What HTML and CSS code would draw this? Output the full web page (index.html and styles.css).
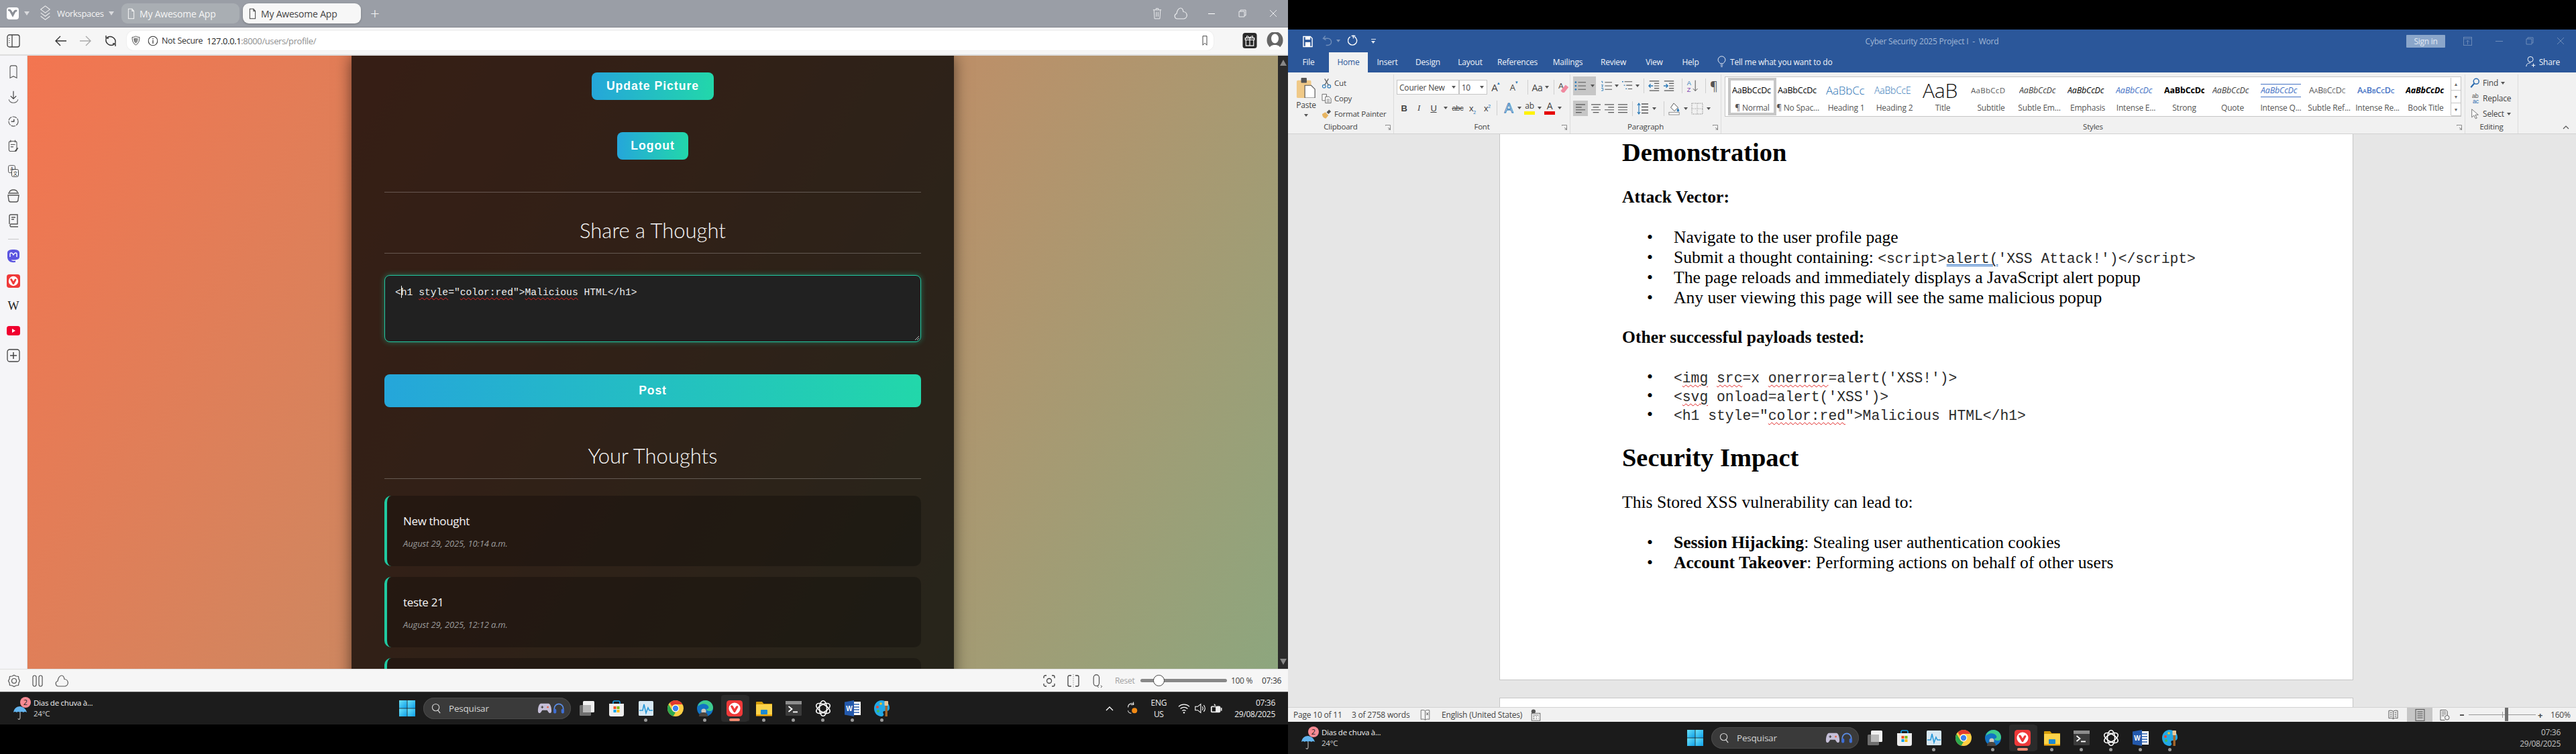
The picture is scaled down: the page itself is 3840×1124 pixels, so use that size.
FILE: index.html
```html
<!DOCTYPE html>
<html lang="en">
<head>
<meta charset="utf-8">
<title>Vivaldi and Word</title>
<link rel="stylesheet" href="styles.css">
</head>
<body>
<svg class="defs" width="0" height="0" aria-hidden="true">
  <defs>
    <linearGradient id="winG" x1="0" y1="0" x2="1" y2="1"><stop offset="0" stop-color="#6ce4fb"/><stop offset="1" stop-color="#0f9fe8"/></linearGradient>
    <symbol id="start" viewBox="0 0 24 24"><rect x="0" y="0" width="11.6" height="11.6" fill="url(#winG)"/><rect x="12.4" y="0" width="11.6" height="11.6" fill="url(#winG)"/><rect x="0" y="12.4" width="11.6" height="11.6" fill="url(#winG)"/><rect x="12.4" y="12.4" width="11.6" height="11.6" fill="url(#winG)"/></symbol>
    <symbol id="taskview" viewBox="0 0 24 24"><rect x="6" y="1" width="17" height="17" rx="1.5" fill="#f2f2f2"/><rect x="1" y="7" width="17" height="16" rx="1.5" fill="#7c7c7c" fill-opacity=".85"/><rect x="6" y="7" width="12" height="11" fill="#b9b9b9"/></symbol>
    <symbol id="store" viewBox="0 0 24 24"><path d="M7 5V2.500A2 2 0 0 1 9 1h6a2 2 0 0 1 2 1.500V5" fill="none" stroke="#14a3ee" stroke-width="1.600"/><path d="M1 5h22v16a3 3 0 0 1-3 3H4a3 3 0 0 1-3-3z" fill="#eee"/><rect x="7.500" y="9" width="4" height="4" fill="#f25022"/><rect x="12.500" y="9" width="4" height="4" fill="#7fba00"/><rect x="7.500" y="14" width="4" height="4" fill="#00a4ef"/><rect x="12.500" y="14" width="4" height="4" fill="#ffb900"/></symbol>
    <symbol id="taskmgr" viewBox="0 0 24 24"><rect x="1" y="1" width="22" height="22" rx="1.500" fill="#d8e8f3"/><path d="M2 15h5l2-9 3 13 3-8 2 4h5" fill="none" stroke="#2a9ad9" stroke-width="1.600"/></symbol>
    <symbol id="chrome" viewBox="0 0 24 24"><circle cx="12" cy="12" r="12" fill="#ffce44"/><path d="M12 0a12 12 0 0 1 10.400 6H12a6 6 0 0 0-5.200 3L3.600 3.900A12 12 0 0 1 12 0z" fill="#e33b2e"/><path d="M1.600 6 7 15a6 6 0 0 0 5 3l-3.300 5.600A12 12 0 0 1 1.600 6z" fill="#2da94f"/><circle cx="12" cy="12" r="5.400" fill="#fff"/><circle cx="12" cy="12" r="4.200" fill="#3b82f1"/></symbol>
    <symbol id="edge" viewBox="0 0 24 24"><circle cx="12" cy="12" r="12" fill="#1273c4"/><path d="M1 9C3 3 8 0 13 0c6 0 11 5 11 11 0 3-2 5-5 5s-5-1-5-3c3 0 4-2 3-4-2-4-9-5-13-2-1 .5-2 1-3 2z" fill="#3ecb8e"/><circle cx="10" cy="16" r="3.600" fill="#cfc7bd"/><path d="M3 24c0-5 3-6 7-6s6 2 6 6z" fill="#4a443f"/></symbol>
    <symbol id="vivaldi" viewBox="0 0 24 24"><rect width="24" height="24" rx="4.500" fill="#ef3939"/><circle cx="12" cy="12" r="8.600" fill="#fff"/><path d="M7.600 7.500c1.400 0 1.900.7 2.500 1.800l1.900 3.400 1.700-3c.5-.9 1.100-1.500 2.400-1.500 1.200 0 1.700 1.300 1 2.400l-3.800 6.700c-.7 1.200-2 1.200-2.700 0L6.500 10c-.7-1.200-.1-2.500 1.100-2.500z" fill="#ef3939"/></symbol>
    <symbol id="explorer" viewBox="0 0 24 24"><path d="M0 3a1 1 0 0 1 1-1h8l2.500 3H24v17a1 1 0 0 1-1 1H1a1 1 0 0 1-1-1z" fill="#d39b0a"/><rect y="6" width="24" height="17" rx="1" fill="#fcd34a"/><rect x="7" y="14" width="10" height="7" rx="1" fill="#1c8ad2"/><rect y="21" width="24" height="2.500" fill="#f1a90e"/></symbol>
    <symbol id="terminal" viewBox="0 0 24 24"><rect y="1" width="24" height="22" rx="1.500" fill="#3b3b3b"/><rect y="1" width="24" height="5" fill="#8d8d8d"/><path d="m4.500 9 5 4-5 4" fill="none" stroke="#fff" stroke-width="1.800"/><rect x="11" y="16.500" width="7" height="1.800" fill="#fff"/></symbol>
    <symbol id="gpt" viewBox="0 0 24 24"><g fill="none" stroke="#fff" stroke-width="1.500"><ellipse cx="12" cy="12" rx="5.500" ry="11.400"/><ellipse cx="12" cy="12" rx="5.500" ry="11.400" transform="rotate(60 12 12)"/><ellipse cx="12" cy="12" rx="5.500" ry="11.400" transform="rotate(120 12 12)"/></g></symbol>
    <symbol id="wordapp" viewBox="0 0 24 24"><rect x="6" y="2" width="18" height="20" fill="#fff"/><path d="M13 6h9M13 10h9M13 14h9M13 18h9" stroke="#2b5fb0" stroke-width="1.600"/><path d="M0 2.500 14 0v24L0 21.500z" fill="#2459ac"/><text x="7" y="16" text-anchor="middle" font-family="Liberation Sans" font-size="10" font-weight="700" fill="#fff">W</text></symbol>
    <symbol id="paint" viewBox="0 0 24 24"><path d="M11 0c7 0 12 5 12 11 0 4-2 5-5 5h-3c-2 0-2 3-1 4 1 2-1 4-3 4C5 24 0 19 0 12 0 5 5 0 11 0z" fill="#22a8e6"/><circle cx="5" cy="10" r="2" fill="#e94b35"/><circle cx="10" cy="5" r="1.800" fill="#f7c325"/><circle cx="6" cy="16" r="2" fill="#3fbb5c"/><rect x="16.500" y="6" width="3.400" height="18" fill="#a5662b"/><rect x="15.500" y="1" width="5.500" height="7" rx="1" fill="#e8c89a"/></symbol>
    <symbol id="umbrella" viewBox="0 0 20 20"><path d="M0 9C1 3 5 0 10 0l1 .2C15 1 19 4 20 9c-2-1.500-4-1.500-5 0-2-1.500-4-1.500-5 0-2-1.500-4-1.500-5 0-2-1.500-3.500-1.500-5 0z" fill="#63b4ee"/><path d="M10 9v8c0 3-3 3-3 1" fill="none" stroke="#bbb" stroke-width="1.100"/></symbol>
    <symbol id="game" viewBox="0 0 24 24"><path d="M6 4h12c3 0 5 6 5 12 0 4-3 5-5 2l-2-3H8l-2 3c-2 3-5 2-5-2C1 10 3 4 6 4z" fill="#c5bfd8"/><circle cx="17" cy="10" r="1.500" fill="#e8664a"/><path d="M6 10h4M8 8v4" stroke="#444" stroke-width="1.400"/></symbol>
    <symbol id="headset" viewBox="0 0 24 24"><path d="M4 15v-3a8 8 0 0 1 16 0v3" fill="none" stroke="#5c8ee6" stroke-width="2"/><rect x="2.500" y="13" width="5" height="8" rx="2" fill="#3f6fd6"/><rect x="16.500" y="13" width="5" height="8" rx="2" fill="#3f6fd6"/></symbol>
    <symbol id="lens" viewBox="0 0 16 16"><circle cx="7" cy="6.500" r="5.500" fill="none" stroke="currentColor" stroke-width="1.200"/><path d="m10.500 11 3.500 4.500" stroke="currentColor" stroke-width="1.400"/></symbol>
    <symbol id="trash" viewBox="0 0 16 20"><path d="M1 4h14M6 4V1.500h4V4M2.500 4l1 15h9l1-15M6.500 7.500v8M9.500 7.500v8" fill="none" stroke="currentColor" stroke-width="1.100"/></symbol>
    <symbol id="cloud" viewBox="0 0 20 20"><path d="M5 18a4 4 0 0 1-1-7.800C4.500 6 7 2 10 2c2 0 3.500 2.500 4 5.500A5.300 5.300 0 0 1 15 18z" fill="none" stroke="currentColor" stroke-width="1.200"/></symbol>
    <symbol id="doc" viewBox="0 0 12 18"><path d="M1.500 1h6l3 3.500V17h-9z M7.500 1v3.500h3" fill="none" stroke="currentColor" stroke-width="1.100"/></symbol>
    <symbol id="stack" viewBox="0 0 20 28"><path d="m10 1 8 6-8 6-8-6zM2 13l8 6 8-6M2 19l8 6 8-6" fill="none" stroke="currentColor" stroke-width="1.200"/></symbol>
    <symbol id="panel" viewBox="0 0 20 20"><rect x="1" y="1" width="18" height="18" rx="3" fill="none" stroke="#444" stroke-width="1.300"/><path d="M8 1v18" stroke="#444" stroke-width="1.300"/><path d="M4 6v1M4 9v1M4 12v1" stroke="#777" stroke-width="1.500"/></symbol>
    <symbol id="back" viewBox="0 0 20 20"><path d="M18 10H2m7-7-7 7 7 7" fill="none" stroke="currentColor" stroke-width="1.400"/></symbol>
    <symbol id="fwd" viewBox="0 0 20 20"><path d="M2 10h16m-7-7 7 7-7 7" fill="none" stroke="currentColor" stroke-width="1.400"/></symbol>
    <symbol id="reload" viewBox="0 0 20 20"><path d="M4 5.500A8 8 0 0 1 17 13M16 14.500A8 8 0 0 1 3 7" fill="none" stroke="#333" stroke-width="1.400"/><path d="M3 2v4h4M17 18v-4h-4" fill="none" stroke="#333" stroke-width="1.400"/></symbol>
    <symbol id="shield" viewBox="0 0 18 20"><path d="M9 1c2 1.500 4.500 2 7.500 2 0 8-2 13-7.500 16C3.500 16 1.500 11 1.500 3 4.500 3 7 2.500 9 1z" fill="none" stroke="#444" stroke-width="1.300"/><path d="M9 4v12c-3-2-4-5-4.500-10.500C6.500 5.500 8 5 9 4z" fill="#777"/><path d="M9 4v12c3-2 4-5 4.500-10.500C11.500 5.500 10 5 9 4z" fill="#888"/></symbol>
    <symbol id="info" viewBox="0 0 20 20"><circle cx="10" cy="10" r="8.500" fill="none" stroke="#333" stroke-width="1.300"/><path d="M10 8.500V15M10 5v1.800" stroke="#333" stroke-width="1.500"/></symbol>
    <symbol id="bm" viewBox="0 0 10 20"><path d="M1 1h8v18l-4-4-4 4z" fill="none" stroke="#333" stroke-width="1.200"/></symbol>
    <symbol id="gift" viewBox="0 0 22 24"><rect width="22" height="24" rx="4" fill="#2b2b2b"/><path d="M4 8h14v3H4zM5 11v9h12v-9M11 8v12M7 8c-2-3 0-5 4 0 4-5 6-3 4 0" fill="none" stroke="#fff" stroke-width="1.200"/></symbol>
    <symbol id="avatar" viewBox="0 0 24 26"><ellipse cx="12" cy="12" rx="12" ry="13" fill="#666"/><ellipse cx="12" cy="9.500" rx="5.500" ry="7" fill="#fff"/><path d="M3 26c1-6 5-7 9-7s8 1 9 7z" fill="#fff"/></symbol>
    <symbol id="bookmark" viewBox="0 0 16 24"><path d="M2 4a3 3 0 0 1 3-3h6a3 3 0 0 1 3 3v19l-6-3-6 3z" fill="none" stroke="#555" stroke-width="1.300"/></symbol>
    <symbol id="download" viewBox="0 0 20 24"><path d="M10 2v13m-5-4 5 5 5-5" fill="none" stroke="#333" stroke-width="1.300"/><path d="M2 17a8 6 0 0 0 16 0" fill="none" stroke="#666" stroke-width="1.300"/></symbol>
    <symbol id="history" viewBox="0 0 20 24"><circle cx="10" cy="12" r="8.500" fill="none" stroke="#555" stroke-width="1.300" stroke-dasharray="8 1.500"/><path d="M6 12h5V8" fill="none" stroke="#333" stroke-width="1.500"/></symbol>
    <symbol id="notes" viewBox="0 0 20 24"><rect x="2" y="3" width="14" height="18" rx="3" fill="none" stroke="#555" stroke-width="1.300"/><path d="M5 1v4M13 1v4M5 9h8M5 13h5" stroke="#555" stroke-width="1.300"/><path d="m13 21 5-6" stroke="#444" stroke-width="2"/></symbol>
    <symbol id="translate" viewBox="0 0 20 24"><rect x="1" y="2" width="12" height="13" rx="2.500" fill="none" stroke="#555" stroke-width="1.200"/><rect x="7" y="9" width="12" height="13" rx="2.500" fill="#fff" stroke="#444" stroke-width="1.200"/><text x="4.500" y="11" font-family="Liberation Sans" font-size="8" fill="#333">A</text><text x="9.500" y="19" font-family="Noto Sans CJK SC" font-size="8" fill="#333">文</text></symbol>
    <symbol id="bowl" viewBox="0 0 20 20"><path d="M4 5a6 4 0 0 1 12 0M2 6h16M2 9h16l-1 7a3 3 0 0 1-3 3H6a3 3 0 0 1-3-3z" fill="none" stroke="#555" stroke-width="1.400"/></symbol>
    <symbol id="book" viewBox="0 0 20 20"><path d="M4 15V3a2 2 0 0 1 2-2h10v14H6a2.500 2.500 0 0 0 0 4h11" fill="none" stroke="#555" stroke-width="1.400"/><path d="M7 5h6M7 8h4" stroke="#555" stroke-width="1.400"/></symbol>
    <symbol id="mastodon" viewBox="0 0 20 20"><path d="M10 0c5 0 9 1 9 5v6c0 3-3 4.500-9 4.500-1 0-2 0-3-.2.300 1.500 2 2 6 1.500v2c-2 .7-11 1.500-12-7V5c0-4 4-5 9-5z" fill="#5b54e0"/><path d="M5 11V6.500c0-2 3-2 4 0l1 1.500 1-1.500c1-2 4-2 4 0V11" fill="none" stroke="#fff" stroke-width="1.400"/></symbol>
    <symbol id="yt" viewBox="0 0 20 14"><rect width="20" height="14" rx="3.500" fill="#f0002f"/><path d="m8 4 5 3-5 3z" fill="#fff"/></symbol>
    <symbol id="plusbox" viewBox="0 0 20 20"><rect x="1" y="1" width="18" height="18" rx="3.500" fill="none" stroke="#444" stroke-width="1.300"/><path d="M10 5v10M5 10h10" stroke="#444" stroke-width="1.500"/></symbol>
    <symbol id="gear" viewBox="0 0 20 20"><circle cx="10" cy="10" r="3.500" fill="none" stroke="#555" stroke-width="1.200"/><path d="M10 1.500 13 3l3.500.5.500 3.500 1.500 3-1.500 3-.5 3.500L13 17l-3 1.500L7 17l-3.500-.5L3 13l-1.500-3L3 7l.5-3.500L7 3z" fill="none" stroke="#555" stroke-width="1.200"/></symbol>
    <symbol id="tiles" viewBox="0 0 20 20"><rect x="3" y="2" width="5" height="16" rx="2.500" fill="none" stroke="#555" stroke-width="1.200"/><rect x="12" y="2" width="5" height="16" rx="2.500" fill="none" stroke="#555" stroke-width="1.200"/></symbol>
    <symbol id="capture" viewBox="0 0 20 20"><path d="M2 6V4a2 2 0 0 1 2-2h2M14 2h2a2 2 0 0 1 2 2v2M18 14v2a2 2 0 0 1-2 2h-2M6 18H4a2 2 0 0 1-2-2v-2" fill="none" stroke="#444" stroke-width="1.300"/><circle cx="10" cy="10" r="3.500" fill="none" stroke="#444" stroke-width="1.300"/></symbol>
    <symbol id="tile2" viewBox="0 0 20 20"><path d="M10 0v20" stroke="#999" stroke-dasharray="1.500 1.500"/><path d="M7 2H4a2 2 0 0 0-2 2v12a2 2 0 0 0 2 2h3M13 2h3a2 2 0 0 1 2 2v12a2 2 0 0 1-2 2h-3" fill="none" stroke="#444" stroke-width="1.300"/></symbol>
    <symbol id="mouse" viewBox="0 0 20 24"><rect x="3" y="1" width="10" height="20" rx="5" fill="none" stroke="#444" stroke-width="1.300"/><path d="m12 20-2 2 2 2M16 20l2 2-2 2" fill="none" stroke="#444" stroke-width="1.200"/></symbol>
    <symbol id="sync" viewBox="0 0 20 24"><path d="M2 10a7 7 0 0 1 11-6M2 16c0 3 3 5 6 5" fill="none" stroke="#eee" stroke-width="1.300"/><path d="M12 0v5H7" fill="none" stroke="#eee" stroke-width="1.300"/><circle cx="14" cy="16" r="5" fill="#f28a14"/></symbol>
    <symbol id="wifi" viewBox="0 0 20 20"><path d="M1 7a13 13 0 0 1 18 0M4 10.500a9 9 0 0 1 12 0M7 14a5 5 0 0 1 6 0" fill="none" stroke="#fff" stroke-width="1.300"/><circle cx="10" cy="17" r="1.300" fill="#fff"/></symbol>
    <symbol id="vol" viewBox="0 0 20 20"><path d="M2 7h4l5-4v14l-5-4H2z" fill="none" stroke="#fff" stroke-width="1.200"/><path d="M13.500 7c1.500 2 1.500 4 0 6M16 4.500c2.700 3.500 2.700 7.500 0 11" fill="none" stroke="#fff" stroke-width="1.200"/></symbol>
    <symbol id="batt" viewBox="0 0 20 20"><rect x="1" y="6" width="16" height="11" rx="2" fill="#eee"/><rect x="17.500" y="9" width="2" height="5" fill="#eee"/><path d="m6 1 5 5H6z" fill="#eee" stroke="#1c1c1c"/><rect x="3" y="8" width="6" height="7" fill="#1c1c1c"/></symbol>
    <symbol id="save" viewBox="0 0 16 20"><path d="M1 3h11l3 3v13H1z" fill="none" stroke="#fff" stroke-width="1.500"/><rect x="4" y="3" width="8" height="5" fill="#fff"/><rect x="4" y="12" width="8" height="7" fill="#fff"/></symbol>
    <symbol id="undo" viewBox="0 0 16 20"><path d="M5 2 1.500 6 6 8.500M2 6h7a5 5 0 0 1 0 11H6" fill="none" stroke="currentColor" stroke-width="1.500"/></symbol>
    <symbol id="redo" viewBox="0 0 16 20"><path d="M4 3.500a7 7 0 1 0 7 0M6 2h6M9 1v5" fill="none" stroke="currentColor" stroke-width="1.500"/></symbol>
    <symbol id="bulb" viewBox="0 0 14 20"><path d="M4.500 13C3 11 1 9.500 1 7a6 6 0 0 1 12 0c0 2.500-2 4-3.500 6zM5 15.500h4M5.500 18h3" fill="none" stroke="#fff" stroke-width="1"/></symbol>
    <symbol id="share" viewBox="0 0 18 20"><circle cx="8" cy="6" r="4.500" fill="none" stroke="#fff" stroke-width="1.100"/><path d="M1 18c0-4 3-6 7-6M13 13v6M10 16h6" fill="none" stroke="#fff" stroke-width="1.100"/></symbol>
    <symbol id="paste" viewBox="0 0 30 32"><rect x="0" y="4" width="23" height="28" rx="2" fill="#f0c987"/><rect x="7" y="0" width="9" height="8" rx="1" fill="#555"/><path d="M13 12h10l6 6v14H13z" fill="#fff" stroke="#555" stroke-width="1.200"/></symbol>
    <symbol id="cut" viewBox="0 0 16 16"><circle cx="4" cy="13" r="2.500" fill="none" stroke="#2b7ab8" stroke-width="1.200"/><circle cx="12" cy="13" r="2.500" fill="none" stroke="#2b7ab8" stroke-width="1.200"/><path d="M5 11 11 1M11 11 5 1" stroke="#666" stroke-width="1.400"/></symbol>
    <symbol id="copy" viewBox="0 0 16 16"><path d="M1 1h7v10H1z" fill="#fff" stroke="#666"/><path d="M6 5h6l3 3v7H6z" fill="#fff" stroke="#666"/><path d="M8 9h5M8 11h5M8 13h5" stroke="#888"/></symbol>
    <symbol id="painter" viewBox="0 0 16 16"><path d="m1 8 5-3 5 5-4 5C4 15 1 12 1 8z" fill="#e8b561"/><path d="m8 5 4-4 3 3-4 4z" fill="#555"/></symbol>
    <symbol id="launcher" viewBox="0 0 8 8"><path d="M0 .500h7.500V8M0 .500V2M4 4l3 3M4.500 7H7V4.500" fill="none" stroke="#777" stroke-width=".8"/></symbol>
    <symbol id="bullets" viewBox="0 0 20 18"><g fill="#2b7ab8"><circle cx="2" cy="3" r="1.500"/><circle cx="2" cy="9" r="1.500"/><circle cx="2" cy="15" r="1.500"/></g><path d="M6 3h13M6 9h13M6 15h13" stroke="#555" stroke-width="1.200"/></symbol>
    <symbol id="numbers" viewBox="0 0 20 18"><path d="M1 1.500h2v3M1 7.500h3l-2 3h2M1 13h3v4H1" fill="none" stroke="#2b7ab8"/><path d="M7 3h12M7 9h12M7 15h12" stroke="#555" stroke-width="1.200"/></symbol>
    <symbol id="multi" viewBox="0 0 20 18"><path d="M1 2h2M4 8h2M7 14h2" stroke="#2b7ab8" stroke-width="1.500"/><path d="M5 2h13M8 8h10M11 14h7" stroke="#555" stroke-width="1.200"/></symbol>
    <symbol id="outdent" viewBox="0 0 20 18"><path d="M2 1h16M10 5h8M10 9h8M10 13h8M2 17h16" stroke="#555" stroke-width="1.300"/><path d="M8 9H1m3-3L1 9l3 3" fill="none" stroke="#2b7ab8" stroke-width="1.500"/></symbol>
    <symbol id="indent" viewBox="0 0 20 18"><path d="M2 1h16M10 5h8M10 9h8M10 13h8M2 17h16" stroke="#555" stroke-width="1.300"/><path d="M1 9h7M5 6l3 3-3 3" fill="none" stroke="#2b7ab8" stroke-width="1.500"/></symbol>
    <symbol id="sort" viewBox="0 0 20 24"><text x="0" y="11" font-family="Liberation Sans" font-size="11" fill="#2b7ab8">A</text><text x="0" y="23" font-family="Liberation Sans" font-size="11" fill="#8246b0">Z</text><path d="M15 2v19m-4-4 4 4 4-4" fill="none" stroke="#555" stroke-width="1.200"/></symbol>
    <symbol id="al" viewBox="0 0 18 16"><path d="M1 1h16M1 5.500h10M1 10h16M1 14.500h10" stroke="#555" stroke-width="1.400"/></symbol>
    <symbol id="ac" viewBox="0 0 18 16"><path d="M1 1h16M4 5.500h10M1 10h16M4 14.500h10" stroke="#555" stroke-width="1.400"/></symbol>
    <symbol id="ar" viewBox="0 0 18 16"><path d="M1 1h16M7 5.500h10M1 10h16M7 14.500h10" stroke="#555" stroke-width="1.400"/></symbol>
    <symbol id="aj" viewBox="0 0 18 16"><path d="M1 1h16M1 5.500h16M1 10h16M1 14.500h16" stroke="#555" stroke-width="1.400"/></symbol>
    <symbol id="lsp" viewBox="0 0 18 18"><path d="M7 2h10M7 6.500h10M7 11h10M7 15.500h10" stroke="#555" stroke-width="1.300"/><path d="M3 1v16M1 4l2-3 2 3M1 14l2 3 2-3" fill="none" stroke="#2b7ab8" stroke-width="1.200"/></symbol>
    <symbol id="shade" viewBox="0 0 20 22"><path d="m9 2 7 7-6 6-6-6z" fill="#fff" stroke="#555" stroke-width="1.100"/><path d="M16 10c1 2 2 3 2 4a2 2 0 0 1-4 0c0-1 1-2 2-4z" fill="#2b7ab8"/><rect x="1" y="17" width="17" height="4" fill="#fff" stroke="#888"/></symbol>
    <symbol id="border" viewBox="0 0 18 18"><rect x="1" y="1" width="16" height="16" fill="none" stroke="#666" stroke-dasharray="1 1.500"/><path d="M1 9h16M9 1v16" stroke="#888" stroke-dasharray="1 1.500"/></symbol>
    <symbol id="effect" viewBox="0 0 20 22"><text x="10" y="19" text-anchor="middle" font-family="Liberation Sans" font-size="22" fill="#dbe7f5" stroke="#2b7ab8" stroke-width=".9">A</text></symbol>
    <symbol id="eraser" viewBox="0 0 20 22"><text x="1" y="13" font-family="Liberation Sans" font-size="13" fill="#555">A</text><path d="m5 17 8-10 5 4-7 9H8z" fill="#f08aa0"/></symbol>
    <symbol id="find" viewBox="0 0 16 18"><circle cx="10" cy="6" r="4.500" fill="none" stroke="#2b6cb0" stroke-width="1.700"/><path d="M6.500 9.500 1 16" stroke="#2b6cb0" stroke-width="2.400"/></symbol>
    <symbol id="replace" viewBox="0 0 16 18"><text x="3" y="8" font-family="Liberation Sans" font-size="10" fill="#555">ab</text><text x="4" y="17" font-family="Liberation Sans" font-size="10" fill="#2b6cb0">ac</text></symbol>
    <symbol id="cursor" viewBox="0 0 16 20"><path d="M2 1v15l4-3.500 3 6 2.500-1-3-6H14z" fill="#fff" stroke="#555"/></symbol>
    <symbol id="winup" viewBox="0 0 14 14"><rect x=".5" y=".5" width="13" height="13" fill="none" stroke="currentColor"/><path d="M1 3h12M7 12V5.500M4.500 8 7 5.500 9.500 8" fill="none" stroke="currentColor"/></symbol>
    <symbol id="restore" viewBox="0 0 12 12"><path d="M3 3V1h8v8H9M1 3h8v8H1z" fill="none" stroke="currentColor"/></symbol>
    <symbol id="close" viewBox="0 0 12 12"><path d="m1 1 10 10M11 1 1 11" stroke="currentColor"/></symbol>
    <symbol id="readv" viewBox="0 0 16 18"><path d="M8 3C6 1.500 4 1.500 1 2v12c3-.5 5-.5 7 1 2-1.500 4-1.500 7-1V2c-3-.5-5-.5-7 1zM8 3v12M3 5h3M3 8h3M10 5h3M10 8h3M3 11h3M10 11h3" fill="none" stroke="#555"/></symbol>
    <symbol id="printv" viewBox="0 0 14 18"><rect x=".5" y=".5" width="13" height="17" fill="none" stroke="#555"/><path d="M3 4h8M3 7h8M3 10h8M3 13h8" stroke="#555"/></symbol>
    <symbol id="webv" viewBox="0 0 16 18"><path d="M1 1h9l2 2v6M1 1v16h7M3 4h7M3 7h7M3 10h4" fill="none" stroke="#555"/><circle cx="11.500" cy="13" r="3.500" fill="none" stroke="#555"/></symbol>
    <symbol id="spellbk" viewBox="0 0 16 20"><path d="M8 3C6 1.500 4 1.500 1 2v15c3-.5 5-.5 7 1 2-1.500 4-1.500 7-1V2c-3-.5-5-.5-7 1zM8 3v15" fill="none" stroke="#666"/><path d="m10 6 3 4M13 6l-3 4" stroke="#444"/></symbol>
    <symbol id="macro" viewBox="0 0 16 20"><circle cx="4" cy="4" r="3.500" fill="#555"/><rect x="1" y="7" width="14" height="12" fill="#fff" stroke="#555"/><path d="M3 10h10M3 13h3M8 13h2M12 13h1M3 16h3M8 16h2M12 16h1" stroke="#555"/></symbol>
  </defs>
</svg>

<div class="screen">
  <section class="browser">
    <header class="tabbar">
      <span class="vlogo"><svg class="i18" viewBox="0 0 18 18"><path d="M3.500 4c1.400 0 2 .8 2.600 2l2.900 5.300 2.300-4.300c.6-1.200 1.200-2 2.700-2" fill="none" stroke="#8b8f96" stroke-width="3.200" stroke-linecap="round"/></svg></span>
      <span class="caret caret-light c1"></span>
      <svg class="ws-icon"><use href="#stack"/></svg>
      <span class="ws-label">Workspaces</span>
      <span class="caret caret-light"></span>
      <div class="tab tab-bg"><svg class="tab-doc"><use href="#doc"/></svg><span>My Awesome App</span></div>
      <div class="tab tab-on"><svg class="tab-doc"><use href="#doc"/></svg><span>My Awesome App</span></div>
      <span class="newtab">+</span>
      <div class="win-btns">
        <svg class="wb-trash"><use href="#trash"/></svg>
        <svg class="wb-cloud"><use href="#cloud"/></svg>
        <span class="wb-min"></span>
        <svg class="wb-box"><use href="#restore"/></svg>
        <svg class="wb-box wb-close"><use href="#close"/></svg>
      </div>
    </header>
    <div class="addrbar">
      <svg class="i20 panel-btn"><use href="#panel"/></svg>
      <svg class="i20 nav nav-back"><use href="#back"/></svg>
      <svg class="i20 nav nav-fwd"><use href="#fwd"/></svg>
      <svg class="i20 nav nav-rel"><use href="#reload"/></svg>
      <div class="urlfield">
        <svg class="shield"><use href="#shield"/></svg>
        <svg class="info"><use href="#info"/></svg>
        <span class="notsec">Not Secure</span>
        <span class="url"><b>127.0.0.1</b>:8000/users/profile/</span>
        <svg class="bm"><use href="#bm"/></svg>
      </div>
      <svg class="gift"><use href="#gift"/></svg>
      <svg class="avatar"><use href="#avatar"/></svg>
    </div>
    <div class="viewport">
      <nav class="sidebar">
        <svg class="side-i"><use href="#bookmark"/></svg>
        <svg class="side-i"><use href="#download"/></svg>
        <svg class="side-i"><use href="#history"/></svg>
        <svg class="side-i"><use href="#notes"/></svg>
        <svg class="side-i"><use href="#translate"/></svg>
        <svg class="side-i"><use href="#bowl"/></svg>
        <svg class="side-i"><use href="#book"/></svg>
        <hr class="side-sep">
        <svg class="side-i"><use href="#mastodon"/></svg>
        <svg class="side-i"><use href="#vivaldi"/></svg>
        <span class="side-w">W</span>
        <svg class="side-i"><use href="#yt"/></svg>
        <svg class="side-i"><use href="#plusbox"/></svg>
      </nav>
      <main class="page">
        <div class="panel">
          <div class="btn-row btn-row-1"><button class="btn btn-update">Update Picture</button></div>
          <div class="btn-row btn-row-2"><button class="btn btn-logout">Logout</button></div>
          <hr class="rule rule-1">
          <h2 class="sec sec-share">Share a Thought</h2>
          <hr class="rule rule-2">
          <div class="textarea"><span class="cursor-wrap">&lt;<i class="text-caret"></i>h1</span> <span class="sq">style</span>="<span class="sq">color:red</span>"&gt;<span class="sq">Malicious</span> HTML&lt;/h1&gt;<svg class="grip" viewBox="0 0 8 8"><path d="M7 1 1 7M7 4 4 7" stroke="#bbb"/></svg></div>
          <button class="btn btn-post">Post</button>
          <h2 class="sec sec-your">Your Thoughts</h2>
          <hr class="rule rule-3">
          <article class="card"><p class="card-t">New thought</p><p class="card-d">August 29, 2025, 10:14 a.m.</p></article>
          <article class="card"><p class="card-t">teste 21</p><p class="card-d">August 29, 2025, 12:12 a.m.</p></article>
          <article class="card"></article>
        </div>
      </main>
      <aside class="scrollbar"><span class="sb-up"></span><span class="sb-down"></span></aside>
    </div>
    <footer class="statusbar">
      <svg class="st-i st-gear"><use href="#gear"/></svg>
      <svg class="st-i"><use href="#tiles"/></svg>
      <svg class="st-i st-cloud"><use href="#cloud"/></svg>
      <svg class="st-i st-right"><use href="#capture"/></svg>
      <svg class="st-i"><use href="#tile2"/></svg>
      <svg class="st-i"><use href="#mouse"/></svg>
      <span class="reset">Reset</span>
      <span class="zoomtrack"><span class="zoomthumb"></span></span>
      <span class="zoomval">100 %</span>
      <span class="stclock">07:36</span>
    </footer>
    <div class="taskbar">
      <div class="weather">
        <svg class="umbrella"><use href="#umbrella"/></svg>
        <span class="badge">2</span>
        <div class="w-text"><span>Dias de chuva à...</span><span class="w-temp">24°C</span></div>
      </div>
      <svg class="tb-i"><use href="#start"/></svg>
      <div class="search"><svg class="lens"><use href="#lens"/></svg><span class="s-label">Pesquisar</span><svg class="s-game"><use href="#game"/></svg><svg class="s-head"><use href="#headset"/></svg></div>
      <div class="apps">
        <span class="app"><svg class="tb-i"><use href="#taskview"/></svg></span>
        <span class="app"><svg class="tb-i"><use href="#store"/></svg></span>
        <span class="app run"><svg class="tb-i"><use href="#taskmgr"/></svg></span>
        <span class="app"><svg class="tb-i"><use href="#chrome"/></svg></span>
        <span class="app run"><svg class="tb-i"><use href="#edge"/></svg></span>
        <span class="app active"><svg class="tb-i"><use href="#vivaldi"/></svg></span>
        <span class="app run"><svg class="tb-i"><use href="#explorer"/></svg></span>
        <span class="app run"><svg class="tb-i"><use href="#terminal"/></svg></span>
        <span class="app run"><svg class="tb-i"><use href="#gpt"/></svg></span>
        <span class="app run"><svg class="tb-i"><use href="#wordapp"/></svg></span>
        <span class="app run"><svg class="tb-i"><use href="#paint"/></svg></span>
      </div>
      <div class="tray">
        <svg class="tray-chev" viewBox="0 0 12 8"><path d="m1 7 5-5 5 5" fill="none" stroke="#fff" stroke-width="1.300"/></svg>
        <svg class="tray-sync"><use href="#sync"/></svg>
        <div class="tray-lang"><span>ENG</span><span>US</span></div>
        <svg class="tray-i"><use href="#wifi"/></svg>
        <svg class="tray-i"><use href="#vol"/></svg>
        <svg class="tray-i"><use href="#batt"/></svg>
        <div class="clock"><span>07:36</span><span>29/08/2025</span></div>
      </div>
    </div>
  </section>

  <section class="word">
    <div class="blackbar"></div>
    <div class="titlebar">
      <svg class="qat qat-save"><use href="#save"/></svg>
      <svg class="qat qat-undo"><use href="#undo"/></svg>
      <span class="caret caret-dim"></span>
      <svg class="qat qat-redo"><use href="#redo"/></svg>
      <span class="qat-more"></span>
      <span class="doc-title">Cyber Security 2025 Project I  -  Word</span>
      <span class="signin">Sign in</span>
      <svg class="wctl wctl-1"><use href="#winup"/></svg>
      <span class="wctl-min"></span>
      <svg class="wctl"><use href="#restore"/></svg>
      <svg class="wctl"><use href="#close"/></svg>
    </div>
    <div class="rtabs">
      <span>File</span><span class="rt-on">Home</span><span>Insert</span><span>Design</span><span>Layout</span><span>References</span><span>Mailings</span><span>Review</span><span>View</span><span>Help</span>
      <span class="tellme"><svg class="bulb"><use href="#bulb"/></svg>Tell me what you want to do</span>
      <span class="shr"><svg class="shr-i"><use href="#share"/></svg>Share</span>
    </div>
    <div class="ribbon">
      <div class="grp g-clip">
        <div class="g-body clip-body">
          <div class="pastebtn"><svg class="paste-i"><use href="#paste"/></svg><span>Paste</span><span class="caret caret-dark"></span></div>
          <div class="clip-list">
            <span><svg class="c-i"><use href="#cut"/></svg>Cut</span>
            <span><svg class="c-i"><use href="#copy"/></svg>Copy</span>
            <span><svg class="c-i"><use href="#painter"/></svg>Format Painter</span>
          </div>
        </div>
        <div class="g-name">Clipboard<svg class="launch"><use href="#launcher"/></svg></div>
      </div>
      <div class="grp g-font">
        <div class="g-body">
          <div class="row f-row1">
            <span class="fbox fbox-name">Courier New<i class="caret caret-dark"></i></span>
            <span class="fbox fbox-size">10<i class="caret caret-dark"></i></span>
            <span class="big-a">A<sup>▴</sup></span>
            <span class="big-a small-a">A<sup>▾</sup></span>
            <span class="tsep"></span>
            <span class="aa">Aa<i class="caret caret-dark"></i></span>
            <span class="tsep"></span>
            <svg class="t18"><use href="#eraser"/></svg>
          </div>
          <div class="row f-row2">
            <b class="ft ft-b">B</b><i class="ft ft-i">I</i><u class="ft ft-u">U</u><i class="caret caret-dark cu"></i>
            <s class="ft ft-s">abc</s><span class="ft ft-x">x<sub>2</sub></span><span class="ft ft-x">x<sup>2</sup></span>
            <span class="tsep tsep-2"></span>
            <svg class="t18"><use href="#effect"/></svg><i class="caret caret-dark"></i>
            <span class="hl hl-y">ab</span><i class="caret caret-dark"></i>
            <span class="hl hl-r">A</span><i class="caret caret-dark"></i>
          </div>
        </div>
        <div class="g-name">Font<svg class="launch"><use href="#launcher"/></svg></div>
      </div>
      <div class="grp g-para">
        <div class="g-body">
          <div class="row p-row1">
            <span class="ptile"><svg class="t16"><use href="#bullets"/></svg><i class="caret caret-dark"></i></span>
            <svg class="t16 p-num"><use href="#numbers"/></svg><i class="caret caret-dark"></i>
            <svg class="t16 p-mul"><use href="#multi"/></svg><i class="caret caret-dark"></i>
            <span class="tsep"></span>
            <svg class="t18w"><use href="#outdent"/></svg>
            <svg class="t18w"><use href="#indent"/></svg>
            <span class="tsep"></span>
            <svg class="t18w"><use href="#sort"/></svg>
            <span class="tsep"></span>
            <span class="pil">¶</span>
          </div>
          <div class="row p-row2">
            <span class="ptile ptile-a"><svg class="al-i"><use href="#al"/></svg></span>
            <svg class="al-i"><use href="#ac"/></svg>
            <svg class="al-i"><use href="#ar"/></svg>
            <svg class="al-i"><use href="#aj"/></svg>
            <span class="tsep"></span>
            <svg class="t18w"><use href="#lsp"/></svg><i class="caret caret-dark"></i>
            <span class="tsep"></span>
            <svg class="t18w"><use href="#shade"/></svg><i class="caret caret-dark"></i>
            <svg class="t18w"><use href="#border"/></svg><i class="caret caret-dark"></i>
          </div>
        </div>
        <div class="g-name">Paragraph<svg class="launch"><use href="#launcher"/></svg></div>
      </div>
      <div class="grp g-styles">
        <div class="g-body">
          <div class="gallery">
            <div class="st st-on"><span class="sp s-n">AaBbCcDc</span><em>¶ Normal</em></div>
            <div class="st"><span class="sp s-n">AaBbCcDc</span><em>¶ No Spac...</em></div>
            <div class="st"><span class="sp s-h1">AaBbCc</span><em>Heading 1</em></div>
            <div class="st"><span class="sp s-h2">AaBbCcE</span><em>Heading 2</em></div>
            <div class="st"><span class="sp s-title">AaB</span><em>Title</em></div>
            <div class="st"><span class="sp s-sub">AaBbCcD</span><em>Subtitle</em></div>
            <div class="st"><span class="sp s-em">AaBbCcDc</span><em>Subtle Em...</em></div>
            <div class="st"><span class="sp s-em s-emd">AaBbCcDc</span><em>Emphasis</em></div>
            <div class="st"><span class="sp s-em s-blue">AaBbCcDc</span><em>Intense E...</em></div>
            <div class="st"><span class="sp s-n s-strong">AaBbCcDc</span><em>Strong</em></div>
            <div class="st"><span class="sp s-em">AaBbCcDc</span><em>Quote</em></div>
            <div class="st"><span class="sp s-em s-blue s-iq">AaBbCcDc</span><em>Intense Q...</em></div>
            <div class="st"><span class="sp s-sc">AaBbCcDc</span><em>Subtle Ref...</em></div>
            <div class="st"><span class="sp s-sc s-scb">AaBbCcDc</span><em>Intense Re...</em></div>
            <div class="st"><span class="sp s-n s-book">AaBbCcDc</span><em>Book Title</em></div>
            <div class="gal-scroll"><span>▴</span><span>▾</span><span>▾</span></div>
          </div>
        </div>
        <div class="g-name">Styles<svg class="launch"><use href="#launcher"/></svg></div>
      </div>
      <div class="grp g-edit">
        <div class="g-body edit-list">
          <span><svg class="c-i"><use href="#find"/></svg>Find<i class="caret caret-dark"></i></span>
          <span><svg class="c-i"><use href="#replace"/></svg>Replace</span>
          <span><svg class="c-i"><use href="#cursor"/></svg>Select<i class="caret caret-dark"></i></span>
        </div>
        <div class="g-name">Editing</div>
      </div>
      <svg class="collapse" viewBox="0 0 10 8"><path d="m1 6 4-4 4 4" fill="none" stroke="#555" stroke-width="1.200"/></svg>
    </div>
    <div class="docarea">
      <article class="sheet">
        <h2 class="d-h2 d-first">Demonstration</h2>
        <h3 class="d-h3">Attack Vector:</h3>
        <ul class="d-ul">
          <li>Navigate to the user profile page</li>
          <li>Submit a thought containing: <code>&lt;script&gt;<span class="gr">alert(</span>'XSS Attack!')&lt;/script&gt;</code></li>
          <li>The page reloads and immediately displays a JavaScript alert popup</li>
          <li>Any user viewing this page will see the same malicious popup</li>
        </ul>
        <h3 class="d-h3 d-h3b">Other successful payloads tested:</h3>
        <ul class="d-ul d-codes">
          <li><code>&lt;<span class="sq">img</span> <span class="sq">src</span>=x <span class="sq">onerror</span>=alert('XSS!')&gt;</code></li>
          <li><code>&lt;<span class="sq">svg</span> onload=alert('XSS')&gt;</code></li>
          <li><code>&lt;h1 style="<span class="sq">color:red</span>"&gt;Malicious HTML&lt;/h1&gt;</code></li>
        </ul>
        <h2 class="d-h2 d-sec">Security Impact</h2>
        <p class="d-p">This Stored XSS vulnerability can lead to:</p>
        <ul class="d-ul">
          <li><b>Session Hijacking</b>: Stealing user authentication cookies</li>
          <li><b>Account Takeover</b>: Performing actions on behalf of other users</li>
        </ul>
      </article>
      <div class="sheet2"></div>
    </div>
    <div class="wstatus">
      <span class="ws-t1">Page 10 of 11</span>
      <span class="ws-t2">3 of 2758 words</span>
      <svg class="ws-i"><use href="#spellbk"/></svg>
      <span class="ws-t3">English (United States)</span>
      <svg class="ws-i"><use href="#macro"/></svg>
      <svg class="ws-i ws-read"><use href="#readv"/></svg>
      <span class="ws-tile"><svg class="ws-i"><use href="#printv"/></svg></span>
      <svg class="ws-i ws-web"><use href="#webv"/></svg>
      <span class="ws-minus"></span>
      <span class="ws-track"><span class="ws-tick"></span><span class="ws-thumb"></span></span>
      <span class="ws-plus">+</span>
      <span class="ws-pct">160%</span>
    </div>
    <div class="taskbar taskbar-w">
      <div class="weather">
        <svg class="umbrella"><use href="#umbrella"/></svg>
        <span class="badge">2</span>
        <div class="w-text"><span>Dias de chuva à...</span><span class="w-temp">24°C</span></div>
      </div>
      <svg class="tb-i"><use href="#start"/></svg>
      <div class="search"><svg class="lens"><use href="#lens"/></svg><span class="s-label">Pesquisar</span><svg class="s-game"><use href="#game"/></svg><svg class="s-head"><use href="#headset"/></svg></div>
      <div class="apps">
        <span class="app"><svg class="tb-i"><use href="#taskview"/></svg></span>
        <span class="app"><svg class="tb-i"><use href="#store"/></svg></span>
        <span class="app run"><svg class="tb-i"><use href="#taskmgr"/></svg></span>
        <span class="app"><svg class="tb-i"><use href="#chrome"/></svg></span>
        <span class="app run"><svg class="tb-i"><use href="#edge"/></svg></span>
        <span class="app active"><svg class="tb-i"><use href="#vivaldi"/></svg></span>
        <span class="app run"><svg class="tb-i"><use href="#explorer"/></svg></span>
        <span class="app run"><svg class="tb-i"><use href="#terminal"/></svg></span>
        <span class="app run"><svg class="tb-i"><use href="#gpt"/></svg></span>
        <span class="app run"><svg class="tb-i"><use href="#wordapp"/></svg></span>
        <span class="app run"><svg class="tb-i"><use href="#paint"/></svg></span>
      </div>
      <div class="tray">
        <div class="clock clock-w"><span>07:36</span><span>29/08/2025</span></div>
      </div>
    </div>
  </section>
</div>
</body>
</html>
```

FILE: styles.css
```css
* { box-sizing: border-box; }
html, body { margin: 0; padding: 0; background: #000; }
body { width: 3840px; height: 1124px; overflow: hidden; font-family: "Open Sans", "Liberation Sans", sans-serif; }
.defs { display: block; height: 0; }
svg { display: block; flex: none; }
p, h2, h3, ul { margin: 0; padding: 0; }
i { font-style: normal; }

.screen { display: grid; grid-template-columns: 1920px 1920px; height: 1124px; }
.browser { display: flex; flex-direction: column; height: 1080px; }

/* carets */
.caret { display: inline-block; width: 0; height: 0; border-left: 3px solid transparent; border-right: 3px solid transparent; border-top: 4px solid #555; flex: none; }
.caret-light { border-left-width: 4px; border-right-width: 4px; border-top: 6px solid #d9dadd; }
.caret-dim { border-top-color: #7e97bd; margin-left: 6px; }

/* browser tabs */
.tabbar { height: 41px; background: #9a9ea6; border-bottom: 1px solid #84878e; display: flex; align-items: center; color: #fff; font-size: 13px; padding-left: 10px; flex: none; }
.vlogo { width: 18px; height: 18px; border-radius: 4px; background: #fff; }
.i18 { width: 18px; height: 18px; }
.c1 { margin-left: 8px; }
.ws-icon { width: 17px; height: 30px; margin-left: 15px; color: #f1f1f1; }
.ws-label { margin-left: 9px; width: 68px; font-size: 13px; white-space: nowrap; letter-spacing: -.35px; color: #f4f4f4; }
.ws-label + .caret { margin-left: 9px; }
.tab { width: 176px; height: 30px; border-radius: 9px; display: flex; align-items: center; padding-left: 9px; font-size: 14px; letter-spacing: -.2px; white-space: nowrap; }
.tab-bg { margin-left: 11px; background: #a9aeb3; color: #f5f5f5; }
.tab-on { margin-left: 5px; background: #f7f7f7; color: #444; box-shadow: 0 1px 3px rgba(0,0,0,.25); }
.tab-doc { width: 11px; height: 17px; margin-right: 7px; color: currentColor; }
.newtab { margin-left: 14px; font-size: 24px; font-weight: 300; line-height: 1; color: #f5f5f5; }
.win-btns { margin-left: auto; display: flex; align-items: center; color: #ecedef; padding-right: 16px; }
.wb-trash { width: 14px; height: 18px; }
.wb-cloud { width: 20px; height: 20px; margin-left: 18px; }
.wb-min { width: 10px; height: 1px; background: #fff; margin-left: 31px; }
.wb-box { width: 12px; height: 12px; margin-left: 35px; }
.wb-close { margin-left: 34px; }

/* address bar */
.addrbar { height: 42px; background: #f6f6f6; border-bottom: 2px solid #dedede; display: flex; align-items: center; flex: none; padding-left: 10px; padding-bottom: 1px; }
.i20 { width: 20px; height: 20px; }
.nav-back { margin-left: 51px; color: #333; }
.nav-fwd { margin-left: 16px; color: #aaa; }
.nav-rel { margin-left: 18px; }
.urlfield { margin-left: 14px; width: 1620px; height: 29px; background: #fff; border-radius: 10px; box-shadow: 0 0 0 1px #f0f0f0; display: flex; align-items: center; padding-left: 7px; font-size: 12.5px; letter-spacing: -.3px; }
.shield { width: 13px; height: 19px; }
.info { width: 16px; height: 16px; margin-left: 11px; }
.notsec { margin-left: 5px; width: 67px; color: #333; white-space: nowrap; }
.url { color: #8f8f8f; font-size: 13px; letter-spacing: -.4px; white-space: nowrap; }
.url b { font-weight: 400; color: #222; }
.bm { width: 8px; height: 15px; margin-left: auto; margin-right: 9px; }
.gift { width: 22px; height: 23px; margin-left: 43px; }
.avatar { width: 25px; height: 26px; margin-left: 14px; }

/* viewport */
.viewport { flex: 1; min-height: 0; display: flex; overflow: hidden; }
.sidebar { width: 41px; background: #f5f5f8; border-right: 1px solid #dcdcdc; display: flex; flex-direction: column; align-items: center; gap: 17px; padding-top: 14px; flex: none; }
.side-i { width: 20px; height: 20px; }
.side-sep { width: 16px; height: 1px; margin: 0 0 -2px; border: 0; background: #c8c8c8; }
.side-w { height: 20px; font: 400 18px/20px "Liberation Serif", serif; color: #222; }
.page { flex: 1; min-width: 0; overflow: hidden; display: flex; justify-content: center; background: linear-gradient(121deg, #f37550 0%, #cf8760 42%, #8da67e 100%); }
.panel { width: 898px; height: 1000px; padding: 25px 49px 0; background: rgba(0,0,0,.76); box-shadow: 0 0 22px rgba(0,0,0,.55); display: flex; flex-direction: column; color: #fff; flex: none; }
.btn { border: 0; border-radius: 8px; background: linear-gradient(90deg, #25a6da, #22d7aa); color: #fff; font: 700 17.6px "Liberation Sans", sans-serif; letter-spacing: 1px; display: block; }
.btn-row { display: flex; justify-content: center; }
.btn-update { width: 182px; height: 41px; }
.btn-row-2 { margin-top: 48px; }
.btn-logout { width: 106px; height: 41px; }
.rule { border: 0; height: 1px; margin: 0; background: rgba(255,255,255,.25); flex: none; }
.rule-1 { margin-top: 48px; }
.sec { font: 300 31px/1.2 "Lato", "Open Sans", sans-serif; text-align: center; color: #f8f8f8; }
.sec-share { margin-top: 38px; }
.rule-2 { margin-top: 15px; }
.textarea { margin-top: 32px; height: 100px; border: 1px solid #22c7a0; border-radius: 8px; background: #212121; box-shadow: 0 0 8px rgba(30,215,170,.45); padding: 15px 15px; font: 14.67px/18px "Liberation Mono", monospace; color: #ededed; white-space: pre; position: relative; flex: none; }
.text-caret { display: inline-block; width: 1px; height: 18px; background: #fff; vertical-align: -4px; margin: 0 -1px 0 0; }
.sq { text-decoration: underline wavy #e02020 1px; text-underline-offset: 3px; }
.grip { position: absolute; right: 1px; bottom: 1px; width: 8px; height: 8px; }
.btn-post { margin-top: 48px; width: 100%; height: 49px; flex: none; letter-spacing: .8px; }
.sec-your { margin-top: 54px; }
.rule-3 { margin-top: 15px; }
.card { margin-top: 25px; height: 105px; border-left: 4px solid #20c9a1; border-radius: 10px; background: rgba(0,0,0,.25); padding: 26px 0 0 24px; flex: none; }
.card + .card { margin-top: 16px; }
.card-t { font: 400 17px/24px "Open Sans", sans-serif; color: #f4f4f4; letter-spacing: -.35px; }
.card-d { margin-top: 12px; font: italic 400 13px/18px "Open Sans", sans-serif; color: #9a9a9a; letter-spacing: -.12px; }
.scrollbar { width: 15px; background: #2a2a2a; flex: none; display: flex; flex-direction: column; justify-content: space-between; align-items: center; padding: 6px 0; }
.sb-up { border-left: 5px solid transparent; border-right: 5px solid transparent; border-bottom: 9px solid #888; }
.sb-down { border-left: 5px solid transparent; border-right: 5px solid transparent; border-top: 9px solid #888; }

/* status bar */
.statusbar { height: 35px; background: #f6f6f6; border-top: 1px solid #e0e0e0; border-bottom: 1px solid #555; display: flex; align-items: center; flex: none; padding-left: 11px; font-size: 12px; letter-spacing: -.3px; color: #555; }
.st-i { width: 20px; height: 20px; margin-right: 16px; }
.st-gear { margin-right: 15px; }
.st-right { margin-left: auto; }
.reset { color: #a1a1a1; width: 38px; white-space: nowrap; }
.zoomtrack { width: 129px; height: 5px; border-radius: 3px; background: #888; position: relative; }
.zoomthumb { position: absolute; left: 19px; top: -6px; width: 17px; height: 17px; border-radius: 50%; background: #fff; border: 1px solid #444; }
.zoomval { margin-left: 6px; width: 46px; color: #444; white-space: nowrap; }
.stclock { width: 39px; color: #333; white-space: nowrap; }

/* taskbar */
.taskbar { height: 48px; background: #1c1c1c; display: flex; align-items: center; flex: none; color: #fff; }
.taskbar-w { background: #1b1b1b; }
.weather { width: 595px; display: flex; align-items: center; padding-left: 20px; position: relative; flex: none; }
.umbrella { width: 20px; height: 20px; margin-top: 14px; }
.badge { position: absolute; left: 30px; top: 0; width: 16px; height: 16px; border-radius: 50%; background: #f78b94; color: #222; font-size: 11px; line-height: 16px; text-align: center; }
.w-text { margin-left: 10px; display: flex; flex-direction: column; font-size: 11.5px; line-height: 16px; letter-spacing: -.25px; color: #f2f2f2; white-space: nowrap; }
.w-temp { color: #cfcfcf; }
.tb-i { width: 24px; height: 24px; }
.search { width: 220px; height: 32px; border-radius: 16px; margin-left: 12px; background: #3a3a3a; box-shadow: inset 0 0 0 1px #494949; display: flex; align-items: center; padding-left: 12px; color: #d4d4d4; }
.lens { width: 15px; height: 16px; }
.s-label { margin-left: 11px; font-size: 13.5px; letter-spacing: -.2px; }
.s-game { width: 22px; height: 22px; margin-left: auto; }
.s-head { width: 20px; height: 24px; margin-right: 8px; }
.apps { display: flex; gap: 20px; margin-left: 12px; }
.app { width: 24px; height: 24px; position: relative; display: block; }
.run::after { content: ""; position: absolute; left: 9px; top: 27px; width: 5px; height: 5px; border-radius: 50%; background: #9a9a9a; }
.active::before { content: ""; position: absolute; left: -8px; top: -8px; width: 40px; height: 40px; border-radius: 4px; background: #2b2b2b; box-shadow: 3px 0 0 -1px #2a2a2a; }
.active::after { content: ""; position: absolute; left: 4px; top: 27px; width: 16px; height: 4px; border-radius: 2px; background: #f08a70; }
.active .tb-i { position: relative; }
.tray { margin-left: auto; display: flex; align-items: center; }
.tray-chev { width: 12px; height: 8px; margin-right: 20px; }
.tray-sync { width: 16px; height: 20px; }
.tray-lang { width: 36px; margin-left: 13px; display: flex; flex-direction: column; align-items: center; font-size: 12px; line-height: 17px; letter-spacing: -.3px; color: #eee; }
.tray-i { width: 18px; height: 18px; margin-left: 6px; }
.tray-lang + .tray-i { margin-left: 11px; }
.clock { margin-left: 18px; padding-right: 19px; display: flex; flex-direction: column; align-items: flex-end; font-size: 12px; line-height: 17px; letter-spacing: -.3px; color: #ededed; }
.clock-w { color: #c2c2c2; padding-right: 23px; }

/* word chrome */
.word { display: flex; flex-direction: column; height: 1124px; }
.blackbar { height: 44px; background: #000; flex: none; }
.titlebar { height: 34px; background: #2b579a; display: flex; align-items: center; padding-left: 22px; flex: none; position: relative; }
.qat { width: 15px; height: 20px; }
.qat-save { color: #fff; }
.qat-undo { margin-left: 14px; color: #6f8db9; }
.qat-redo { margin-left: 11px; color: #fff; }
.qat-more { margin-left: 20px; width: 7px; height: 6px; border-top: 1px solid #dfe6f0; border-bottom: 4px solid transparent; position: relative; }
.qat-more::after { content: ""; position: absolute; left: 0; top: 2px; border-left: 3.5px solid transparent; border-right: 3.5px solid transparent; border-top: 4px solid #dfe6f0; }
.doc-title { position: absolute; left: 0; right: 0; text-align: center; font-size: 12px; letter-spacing: -.2px; color: #a2b7d6; white-space: pre; pointer-events: none; }
.signin { margin-left: auto; width: 58px; height: 19px; border-radius: 1px; background: #8ba6ca; color: #e2e9f3; font-size: 12px; line-height: 19px; text-align: center; letter-spacing: -.3px; }
.wctl { width: 12px; height: 12px; color: #6f8db9; margin-left: 34px; }
.wctl-1 { width: 13px; height: 13px; margin-left: 27px; }
.wctl-min { width: 11px; height: 1px; background: #6f8db9; margin-left: 35px; }
.wctl:last-child { margin-right: 17px; }
.rtabs { height: 30px; background: #2b579a; display: grid; grid-template-columns: 61px 58px 58px 63px 63px 78px 72px 64px 58px 50px 304px 1fr; align-items: stretch; flex: none; color: #f0f3f8; font-size: 12px; letter-spacing: -.2px; }
.rtabs > span { display: flex; align-items: center; justify-content: center; white-space: nowrap; padding-bottom: 2px; }
.rtabs .rt-on { background: #f1f1f1; color: #2b579a; }
.rtabs .tellme { justify-content: flex-start; padding-left: 15px; }
.bulb { width: 13px; height: 18px; margin-right: 6px; }
.rtabs .shr { justify-content: flex-end; padding-right: 24px; }
.shr-i { width: 16px; height: 18px; margin-right: 4px; }
.ribbon { height: 92px; background: #f1f1f1; border-bottom: 1px solid #d2d2d2; display: flex; flex: none; color: #444; font-size: 12px; letter-spacing: -.2px; padding-top: 3px; position: relative; }
.grp { display: flex; flex-direction: column; border-right: 1px solid #dcdcdc; flex: none; }
.g-body { flex: 1; min-height: 0; }
.g-name { height: 15px; text-align: center; position: relative; font-size: 11.5px; line-height: 15px; color: #444; margin-bottom: 3px; }
.launch { position: absolute; right: 4px; top: 5px; width: 8px; height: 8px; }
.g-clip { width: 158px; }
.g-font { width: 263px; }
.g-para { width: 225px; }
.g-styles { width: 1109px; }
.g-edit { width: 79px; }
.clip-body { display: flex; padding-left: 12px; }
.pastebtn { width: 30px; display: flex; flex-direction: column; align-items: center; padding-top: 5px; }
.paste-i { width: 30px; height: 30px; }
.pastebtn span:not(.caret) { margin-top: 2px; line-height: 18px; font-size: 12px; }
.pastebtn .caret { margin-top: 4px; }
.clip-list { margin-left: 8px; display: flex; flex-direction: column; gap: 4px; padding-top: 3px; font-size: 11.5px; }
.clip-list span, .edit-list span { display: flex; align-items: center; height: 19px; white-space: nowrap; }
.c-i { width: 15px; height: 16px; margin-right: 4px; }
.row { display: flex; align-items: center; }
.f-row1 { height: 24px; margin-top: 7px; padding-left: 4px; }
.f-row2 { height: 24px; margin-top: 7px; padding-left: 4px; }
.fbox { height: 22px; background: #fff; border: 1px solid #c6c6c6; display: flex; align-items: center; justify-content: space-between; padding: 0 4px 0 3px; font-size: 12px; }
.fbox-name { width: 94px; }
.fbox-size { width: 43px; padding-left: 3px; }
.big-a { margin-left: 6px; font-size: 15px; width: 22px; }
.big-a sup { font-size: 7px; color: #2b7ab8; vertical-align: 10px; line-height: 0; }
.small-a { font-size: 13px; }
.tsep { width: 1px; height: 22px; background: #cfcfcf; margin: 0 5px; flex: none; }
.aa { font-size: 14px; display: flex; align-items: center; gap: 3px; width: 28px; }
.t18 { width: 18px; height: 20px; }
.ft { width: 22px; text-align: center; font-size: 13px; font-family: "Liberation Sans", sans-serif; text-decoration-thickness: 1px; color: #444; }
.cu { margin-right: 3px; }
.ft-i { font-style: italic; font-family: "Liberation Serif", serif; }
.ft-s { font-size: 11px; }
.ft sub, .ft sup { font-size: 7px; color: #2b7ab8; line-height: 0; }
.tsep-2 { margin: 0 8px 0 3px; }
.f-row2 .caret { margin: 0 4px; }
.hl { width: 16px; height: 20px; font-size: 12px; text-align: center; line-height: 14px; }
.hl-y { border-bottom: 5px solid #fff200; }
.hl-r { border-bottom: 5px solid #e60000; font-size: 14px; }
.p-row1 { height: 28px; margin-top: 3px; padding-left: 4px; }
.p-row2 { height: 23px; margin-top: 8px; padding-left: 4px; }
.ptile { display: flex; align-items: center; justify-content: center; gap: 3px; width: 34px; height: 28px; background: #c6c6c6; flex: none; }
.ptile-a { width: 22px; height: 23px; }
.t16 { width: 18px; height: 16px; }
.p-num { margin-left: 7px; }
.p-mul { margin-left: 4px; }
.p-row1 .caret { margin-left: 3px; }
.p-row1 .tsep { margin: 0 6px; }
.t18w { width: 18px; height: 20px; margin-right: 4px; }
.pil { font-size: 18px; color: #555; }
.al-i { width: 16px; height: 14px; margin-left: 4px; flex: none; }
.ptile-a .al-i { margin: 0; }
.p-row2 .tsep { margin: 0 6px; }
.p-row2 .caret { margin: 0 5px 0 1px; }
.gallery { margin: 3px 0 0 5px; height: 60px; width: 1098px; background: #fff; border: 1px solid #c6c6c6; display: flex; padding: 1px 0; }
.st { width: 72px; flex: none; display: flex; flex-direction: column; align-items: center; overflow: hidden; color: #444; }
.st-on { border: 4px solid #c6c6c6; margin-left: 4px; margin-right: -4px; }
.sp { height: 33px; font: 400 12.5px/33px "Open Sans", sans-serif; white-space: nowrap; width: 60px; overflow: hidden; text-align: left; color: #222; letter-spacing: -.2px; flex: none; margin-top: 2px; }
.st-on .sp { margin-top: -2px; }
.st em { font-style: normal; font-size: 12px; line-height: 20px; white-space: nowrap; letter-spacing: -.2px; color: #555; }
.s-n { color: #000; }
.s-strong { font-weight: 700; }
.s-h1 { font-size: 17px; color: #2e74b5; font-weight: 300; }
.s-h2 { font-size: 14px; color: #2e74b5; font-weight: 300; }
.s-title { font-size: 30px; font-weight: 300; color: #111; overflow: visible; }
.s-sub { color: #5a5a5a; letter-spacing: .3px; font-size: 11.5px; }
.s-em { font-style: italic; color: #404040; }
.s-emd { color: #000; }
.s-blue { color: #4472c4; }
.s-iq { border-top: 1px solid #4472c4; border-bottom: 1px solid #4472c4; height: 20px; line-height: 18px; margin-top: 9px; margin-bottom: 6px; }
.s-sc { font-variant: small-caps; color: #5a5a5a; }
.s-scb { color: #4472c4; font-weight: 600; }
.s-book { font-style: italic; font-weight: 700; }
.gal-scroll { width: 15px; display: flex; flex-direction: column; border-left: 1px solid #c6c6c6; margin-left: auto; font-size: 8px; color: #666; text-align: center; }
.gal-scroll span { flex: 1; border-bottom: 1px solid #c6c6c6; line-height: 18px; }
.edit-list { display: flex; flex-direction: column; gap: 4px; padding: 3px 0 0 7px; }
.edit-list .caret { margin-left: 4px; }
.collapse { position: absolute; right: 10px; top: 78px; width: 10px; height: 8px; }
.docarea { flex: 1; min-height: 0; background: #e6e6e6; overflow: hidden; display: flex; flex-direction: column; align-items: flex-start; padding-left: 315px; }
.sheet { width: 1273px; height: 814px; background: #fff; border: 1px solid #c6c6c6; border-top: 0; padding: 0 0 0 182px; flex: none; font: 25.6px/30px "Liberation Serif", serif; color: #000; }
.sheet2 { width: 1273px; height: 20px; margin-top: 26px; background: #fff; border: 1px solid #c6c6c6; flex: none; }
.d-h2 { font: 700 38.4px/46px "Liberation Serif", serif; }
.d-first { margin-top: 4px; }
.d-h3 { font: 700 25.6px/30px "Liberation Serif", serif; margin-top: 29px; }
.d-h3b { margin-top: 29px; }
.d-ul { list-style: none; margin-top: 30px; }
.d-ul li { padding-left: 77px; position: relative; }
.d-ul li::before { content: "•"; position: absolute; left: 37px; top: 0; }
.d-codes { margin-top: 30px; }
.d-codes li { line-height: 28px; }
code { font: 21.33px "Liberation Mono", monospace; color: #2b2b2b; }
.gr { text-decoration: underline double #2b6fc4 1px; text-underline-offset: 2px; }
.d-sec { margin-top: 27px; }
.d-p { margin-top: 29px; }
.wstatus { height: 22px; background: #f1f1f1; border-top: 1px solid #d2d2d2; display: flex; align-items: center; flex: none; padding-left: 8px; font-size: 12px; letter-spacing: -.2px; color: #444; }
.ws-t1 { width: 87px; white-space: nowrap; }
.ws-t2 { width: 102px; white-space: nowrap; }
.ws-i { width: 15px; height: 18px; }
.ws-t3 { margin-left: 17px; width: 133px; white-space: nowrap; }
.ws-read { margin-left: auto; }
.ws-tile { margin-left: 13px; width: 38px; height: 21px; background: #c6c6c6; display: flex; align-items: center; justify-content: center; }
.ws-web { margin-left: 11px; }
.ws-minus { margin-left: 15px; width: 6px; height: 2px; background: #555; }
.ws-track { margin-left: 7px; width: 100px; height: 1px; background: #999; position: relative; }
.ws-tick { position: absolute; left: 50px; top: -4px; width: 1px; height: 9px; background: #999; }
.ws-thumb { position: absolute; left: 54px; top: -10px; width: 5px; height: 20px; background: #6f6f6f; }
.ws-plus { margin-left: 3px; width: 10px; font-size: 13px; font-weight: 700; }
.ws-pct { margin-left: 9px; white-space: nowrap; width: 38px; }
```
